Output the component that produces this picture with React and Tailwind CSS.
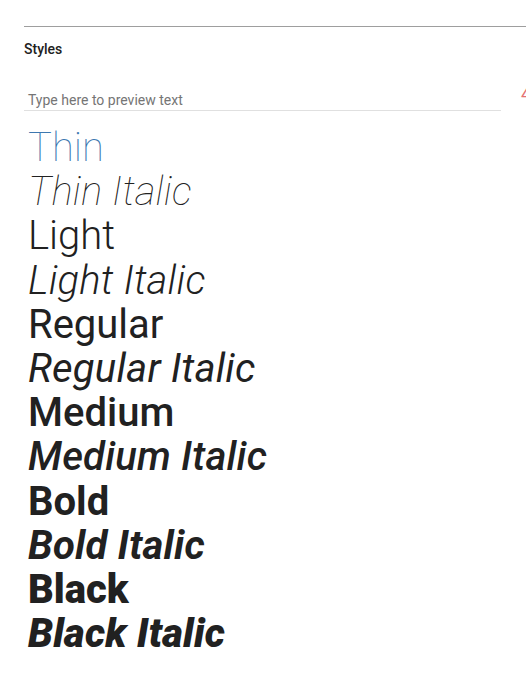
export default function App() {
  const styles = [
    { label: "Thin", cls: "font-thin not-italic text-[#3d78b0]" },
    { label: "Thin Italic", cls: "font-thin italic tracking-[0.2px]" },
    { label: "Light", cls: "font-light not-italic" },
    { label: "Light Italic", cls: "font-light italic tracking-[0.2px]" },
    { label: "Regular", cls: "font-normal not-italic" },
    { label: "Regular Italic", cls: "font-normal italic tracking-[0.2px]" },
    { label: "Medium", cls: "font-medium not-italic" },
    { label: "Medium Italic", cls: "font-medium italic tracking-[0.2px]" },
    { label: "Bold", cls: "font-bold not-italic" },
    { label: "Bold Italic", cls: "font-bold italic tracking-[0.2px]" },
    { label: "Black", cls: "font-black not-italic" },
    { label: "Black Italic", cls: "font-black italic tracking-[0.2px]" },
  ];
  return (
    <div className="relative w-[526px] h-[678px] overflow-hidden bg-white font-['Roboto',sans-serif] text-[#212121]">
      <div className="pt-[26px] pl-6">
        <div className="border-t border-[#9e9e9e]" />
        <div className="mt-[12px] text-sm leading-5 font-medium text-[#212121]">Styles</div>
        <div className="mt-[31px] flex items-start">
          <div className="w-[477px] shrink-0 border-b border-[#e0e0e0] pl-1 text-sm leading-5 text-[#757575]">
            Type here to preview text
          </div>
          <div className="ml-[20px] -mt-[6px] shrink-0 text-lg leading-5 text-[#e57373]">4</div>
        </div>
        <div className="mt-[15px] pl-[4px] flex flex-col">
          {styles.map((s) => (
            <div key={s.label} className={`text-[40px] leading-[44.2px] ${s.cls}`}>
              {s.label}
            </div>
          ))}
        </div>
      </div>
    </div>
  );
}
